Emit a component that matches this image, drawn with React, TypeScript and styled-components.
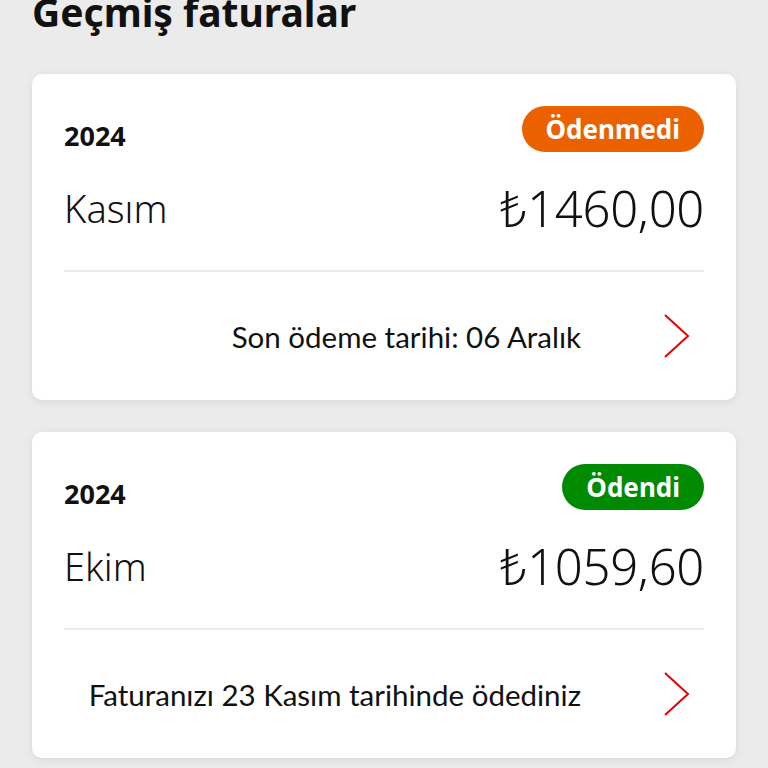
import styled, { createGlobalStyle } from "styled-components"

const GlobalStyle = createGlobalStyle`
    body{
        margin:0;
        background-color:#ebebeb;
        font-family: "Noto Sans", "DejaVu Sans", sans-serif;
        color:#111;
    }
`

const Page = styled.div`
    padding: 0 32px 40px;
    overflow: hidden;
    height: 768px;
    box-sizing: border-box;
`

const Title = styled.h1`
    margin: -12px 0 38px;
    font-size: 39px;
    line-height: 48px;
    font-weight: 700;
    color:#111;
`

const Card = styled.div`
    background-color:#fff;
    border-radius: 10px;
    box-shadow: 0 2px 8px rgba(0,0,0,0.08);
    padding: 32px 32px 0;
    margin-bottom: 32px;
`

const TopRow = styled.div`
    display: flex;
    justify-content: space-between;
    align-items: center;
    height: 46px;
`

const Year = styled.div`
    font-size: 27px;
    font-weight: 700;
    padding-top: 12px;
`

const Badge = styled.div<{ $paid?: boolean }>`
    height: 46px;
    padding: 0 24px;
    border-radius: 23px;
    display: flex;
    align-items: center;
    background-color:${props => props.$paid ? "#008a00" : "#eb6100"};
    color:#fff;
    font-size: 26px;
    font-weight: 700;
`

const MainRow = styled.div`
    display: flex;
    justify-content: space-between;
    align-items: center;
    margin-top: 28px;
    height: 56px;
`

const Month = styled.div`
    font-size: 38px;
    font-weight: 300;
`

const Amount = styled.div`
    font-size: 49px;
    font-weight: 300;
    letter-spacing: -0.3px;
`

const Divider = styled.div`
    height: 2px;
    background-color:#ebebeb;
    margin-top: 34px;
`

const Footer = styled.div`
    height: 128px;
    display: flex;
    justify-content: flex-end;
    align-items: center;
    gap: 82px;
    padding-right: 13px;
`

const FooterText = styled.div`
    font-family: "Lato", "Noto Sans", sans-serif;
    font-size: 29.5px;
    color:#111;
`

const Chevron = () => (
    <svg width="28" height="46" viewBox="0 0 28 46" fill="none">
        <path d="M2 2 L25 23 L2 44" stroke="#e60000" strokeWidth="2" />
    </svg>
)

const bills = [
    { year: "2024", month: "Kasım", amount: "₺1460,00", paid: false, note: "Son ödeme tarihi: 06 Aralık" },
    { year: "2024", month: "Ekim", amount: "₺1059,60", paid: true, note: "Faturanızı 23 Kasım tarihinde ödediniz" },
]

const App = () => {
    return (
        <Page>
            <GlobalStyle />
            <Title>Geçmiş faturalar</Title>
            {bills.map((bill, i) => (
                <Card key={i}>
                    <TopRow>
                        <Year>{bill.year}</Year>
                        <Badge $paid={bill.paid}>{bill.paid ? "Ödendi" : "Ödenmedi"}</Badge>
                    </TopRow>
                    <MainRow>
                        <Month>{bill.month}</Month>
                        <Amount>{bill.amount}</Amount>
                    </MainRow>
                    <Divider />
                    <Footer>
                        <FooterText>{bill.note}</FooterText>
                        <Chevron />
                    </Footer>
                </Card>
            ))}
        </Page>
    )
}

export default App
